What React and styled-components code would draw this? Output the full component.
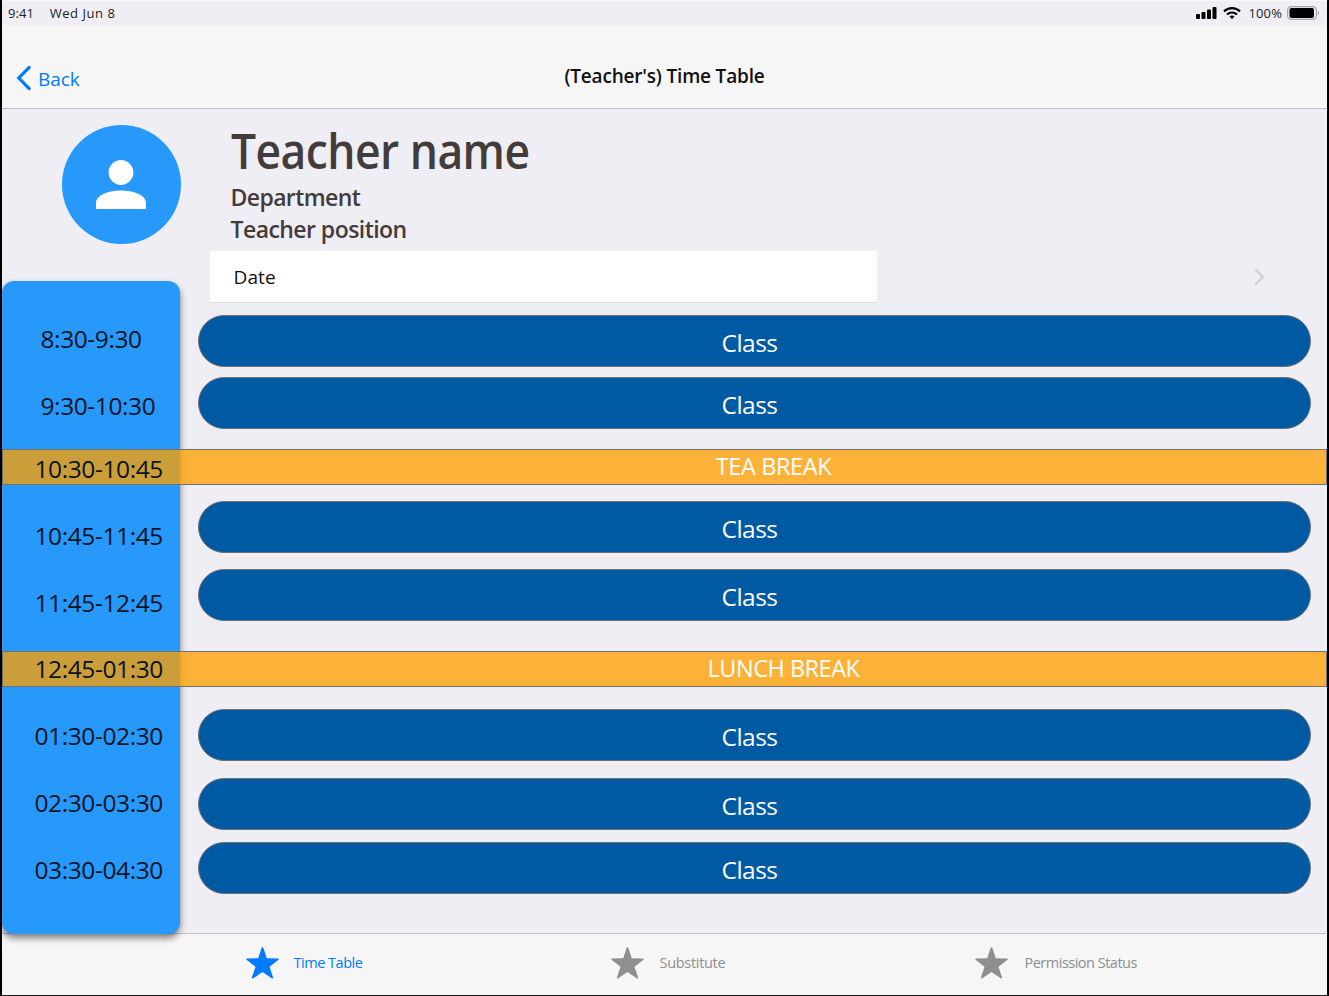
import React from "react";
import styled, { createGlobalStyle } from "styled-components";

const GlobalStyle = createGlobalStyle`
  * { box-sizing: border-box; }
  body {
    margin: 0;
    overflow: hidden;
    background: #000;
    font-family: "Open Sans", "Noto Sans", sans-serif;
  }
`;

const Screen = styled.div`
  width: 1329px;
  height: 996px;
  display: flex;
  flex-direction: column;
  background: #efeef4;
  border: solid #000;
  border-width: 0 2px 1px 2px;
  border-bottom-color: #1b1b1d;
`;

const StatusBar = styled.div`
  height: 25px;
  flex: none;
  display: flex;
  align-items: center;
  padding: 0 7px 0 6px;
  border-top: 1px solid #f8f8fa;
  font-size: 13px;
  line-height: 20px;
  color: #222;
`;

const StatusText = styled.span`
  letter-spacing: ${(p) => p.$spacing || 0}px;
  margin-right: ${(p) => p.$gap || 0}px;
  white-space: nowrap;
`;

const StatusIcons = styled.div`
  margin-left: auto;
  display: flex;
  align-items: center;
`;

const SignalIcon = styled.svg`
  margin-right: 6px;
`;

const WifiIcon = styled.svg`
  margin: -1px 8px 0 0;
`;

const NavBar = styled.header`
  height: 84px;
  flex: none;
  display: grid;
  grid-template-columns: 1fr auto 1fr;
  background: #f6f6f6;
  border-bottom: 1px solid #c1c0c6;
`;

const BackButton = styled.button`
  display: flex;
  align-items: center;
  height: 32px;
  margin: 37px 0 0 13px;
  padding: 0;
  border: 0;
  background: none;
  color: #007aff;
  font: 400 19px/32px "Open Sans", "Noto Sans", sans-serif;
  letter-spacing: -0.1px;
`;

const BackLabel = styled.span`
  padding-top: 1px;
`;

const BackIcon = styled.svg`
  margin-right: 6px;
`;

const Title = styled.h1`
  margin: 36px 0 0;
  font-size: 19px;
  line-height: 30px;
  font-weight: 600;
  letter-spacing: -0.18px;
  color: #111;
`;

const Profile = styled.section`
  height: 142px;
  flex: none;
  display: flex;
  padding: 16px 0 0 59.5px;
`;

const Avatar = styled.div`
  width: 119px;
  height: 119px;
  margin-right: 50px;
  border-radius: 50%;
  background: #2699fb;
  display: grid;
  place-items: center;
`;

const Details = styled.div`
  color: #433c3b;
  font-weight: 600;
`;

const Name = styled.h2`
  margin: -6px 0 -2px;
  font-size: 48px;
  line-height: 64px;
  font-weight: 600;
  letter-spacing: -0.6px;
  transform: scaleX(0.926);
  transform-origin: left center;
`;

const Detail = styled.p`
  margin: 0;
  font-size: 23px;
  line-height: 32px;
  letter-spacing: ${(p) => p.$spacing}px;
`;

const Timetable = styled.main`
  flex: 1;
  min-height: 0;
  display: grid;
  grid-template: 1fr / 1fr;
`;

const TimePanel = styled.aside`
  grid-area: 1 / 1;
  z-index: 1;
  width: 178.4px;
  height: 653px;
  margin-top: 30px;
  border-radius: 12px;
  background: #2699fb;
  box-shadow: 0 4px 7px rgba(0, 0, 0, 0.5);
`;

const TimeList = styled.div`
  grid-area: 1 / 1;
  z-index: 3;
  width: 179px;
  padding-top: 53px;
`;

const Time = styled.div`
  display: flex;
  align-items: center;
  height: ${(p) => p.$height}px;
  padding-left: ${(p) => p.$inset}px;
  font-size: 24.5px;
  letter-spacing: -0.4px;
  color: #07131f;
  white-space: nowrap;
`;

const Sessions = styled.div`
  grid-area: 1 / 1;
  z-index: 2;
  display: flex;
  flex-direction: column;
`;

const DateRow = styled.div`
  height: 52px;
  flex: none;
  display: flex;
  align-items: center;
  justify-content: space-between;
  margin: 0 61px 12px 208px;
`;

const DateField = styled.div`
  width: 667.4px;
  height: 52px;
  padding-left: 23.5px;
  background: #fff;
  border-bottom: 1px solid #dddce2;
  font-size: 19px;
  line-height: 52px;
  letter-spacing: 0.1px;
  color: #111;
`;

const ClassPill = styled.div`
  height: 52px;
  flex: none;
  margin: ${(p) => p.$gap}px 16px 0 196px;
  padding-right: 10px;
  border: 1px solid #707070;
  border-radius: 26px;
  background: #0059a3;
  color: #fff;
  font-size: 24.5px;
  line-height: 54px;
  letter-spacing: -0.5px;
  text-align: center;
`;

const BreakBand = styled.div`
  height: 36px;
  flex: none;
  margin-top: ${(p) => p.$gap}px;
  padding-left: ${(p) => p.$inset}px;
  border: 1px solid #707070;
  background: rgba(255, 160, 0, 0.77);
  color: #fff;
  font-size: 23.5px;
  line-height: 32px;
  letter-spacing: ${(p) => p.$spacing}px;
  text-align: center;
`;

const TabBar = styled.nav`
  height: 62px;
  flex: none;
  display: grid;
  grid-template-columns: 364.5px 364.5px 1fr;
  padding-left: 244px;
  background: #f6f6f6;
  border-top: 1px solid #c1c0c6;
`;

const Tab = styled.div`
  display: flex;
  align-items: center;
  padding-bottom: 4px;
  color: ${(p) => (p.$active ? "#007aff" : "#8e8e93")};
  font-size: 14.5px;
  letter-spacing: ${(p) => p.$spacing}px;
`;

const StarIcon = styled.svg`
  margin-right: ${(p) => p.$gap}px;
`;

const times = [
  { label: "8:30-9:30", height: 68, inset: 38.5 },
  { label: "9:30-10:30", height: 66, inset: 38.5 },
  { label: "10:30-10:45", height: 60, inset: 32.5 },
  { label: "10:45-11:45", height: 74, inset: 32.5 },
  { label: "11:45-12:45", height: 60, inset: 32.5 },
  { label: "12:45-01:30", height: 72, inset: 32.5 },
  { label: "01:30-02:30", height: 62, inset: 32.5 },
  { label: "02:30-03:30", height: 72, inset: 32.5 },
  { label: "03:30-04:30", height: 62, inset: 32.5 },
];

const sessions = [
  { label: "Class", gap: 0 },
  { label: "Class", gap: 10 },
  { label: "TEA BREAK", gap: 20, rest: true, inset: 218, spacing: -0.4 },
  { label: "Class", gap: 16 },
  { label: "Class", gap: 16 },
  { label: "LUNCH BREAK", gap: 30, rest: true, inset: 238, spacing: -0.5 },
  { label: "Class", gap: 22 },
  { label: "Class", gap: 17 },
  { label: "Class", gap: 12 },
];

const tabs = [
  { label: "Time Table", active: true, gap: 14.5, spacing: -0.48 },
  { label: "Substitute", gap: 16, spacing: -0.3 },
  { label: "Permission Status", gap: 16.5, spacing: -0.5 },
];

export default function App() {
  return (
    <>
      <GlobalStyle />
      <Screen>
        <StatusBar>
          <StatusText $gap={15.5} $spacing={0.1}>9:41</StatusText>
          <StatusText $spacing={0.55}>Wed Jun 8</StatusText>
          <StatusIcons>
            <SignalIcon width="21" height="12" viewBox="0 0 21 12">
              <rect x="0" y="7" width="4" height="5" rx="1" />
              <rect x="5.5" y="5" width="4" height="7" rx="1" />
              <rect x="11" y="2.5" width="4" height="9.5" rx="1" />
              <rect x="16.5" y="0" width="4" height="12" rx="1" />
            </SignalIcon>
            <WifiIcon width="18" height="12" viewBox="0 0 18 12" fill="none" stroke="#000" strokeWidth="2.2">
              <path d="M1 4.4C5.5 0.1 12.5 0.1 17 4.4" />
              <path d="M4 7.5C6.8 4.8 11.2 4.8 14 7.5" />
              <path d="M9 12L6.4 9.5C7.9 8.2 10.1 8.2 11.6 9.5Z" fill="#000" stroke="none" />
            </WifiIcon>
            <StatusText $gap={5} $spacing={0.1}>100%</StatusText>
            <svg width="33" height="14" viewBox="0 0 33 14">
              <rect x="0.6" y="0.6" width="28.8" height="12.8" rx="3.6" fill="none" stroke="#a5a4a8" strokeWidth="1.2" />
              <rect x="2.5" y="2" width="24.5" height="10" rx="2" />
              <path d="M30.7 4.5C32.5 5.5 32.5 8.5 30.7 9.5Z" fill="#a5a4a8" />
            </svg>
          </StatusIcons>
        </StatusBar>

        <NavBar>
          <BackButton>
            <BackIcon width="17" height="26" viewBox="0 0 17 26" fill="none" stroke="#007aff" strokeWidth="3.2" strokeLinecap="round" strokeLinejoin="miter">
              <path d="M14.2 2.4L3.8 13L14.2 23.6" />
            </BackIcon>
            <BackLabel>Back</BackLabel>
          </BackButton>
          <Title>(Teacher's) Time Table</Title>
        </NavBar>

        <Profile>
          <Avatar>
            <svg width="50" height="50" viewBox="0 0 50 50" fill="#fff">
              <circle cx="25" cy="12.5" r="12.4" />
              <path d="M0 49V43C0 35 13 30.5 25 30.5S50 35 50 43V49Z" />
            </svg>
          </Avatar>
          <Details>
            <Name>Teacher name</Name>
            <Detail $spacing={-0.6}>Department</Detail>
            <Detail $spacing={-0.55}>Teacher position</Detail>
          </Details>
        </Profile>

        <Timetable>
          <TimePanel />
          <Sessions>
            <DateRow>
              <DateField>Date</DateField>
              <svg width="14" height="18" viewBox="0 0 14 18" fill="none" stroke="#d1d0d6" strokeWidth="2.3">
                <path d="M3 1.3L11 9L3 16.7" />
              </svg>
            </DateRow>
            {sessions.map((s, i) =>
              s.rest ? (
                <BreakBand key={i} $gap={s.gap} $inset={s.inset} $spacing={s.spacing}>{s.label}</BreakBand>
              ) : (
                <ClassPill key={i} $gap={s.gap}>{s.label}</ClassPill>
              )
            )}
          </Sessions>
          <TimeList>
            {times.map((t) => (
              <Time key={t.label} $height={t.height} $inset={t.inset}>{t.label}</Time>
            ))}
          </TimeList>
        </Timetable>

        <TabBar>
          {tabs.map((t) => (
            <Tab key={t.label} $active={t.active} $spacing={t.spacing}>
              <StarIcon $gap={t.gap} width="33" height="32" viewBox="0 0 33 32" fill="currentColor">
                <path d="M15.6 1.1Q16.5 -0.4 17.4 1.1L20.8 11.2L31.7 11.4Q33.6 11.8 32.2 13.1L23.5 19.7L27 30.2Q27.2 31.9 25.7 31.2L16.5 25L7.3 31.2Q5.8 31.9 6 30.2L9.5 19.7L0.8 13.1Q-0.6 11.8 1.3 11.4L12.2 11.2Z" />
              </StarIcon>
              {t.label}
            </Tab>
          ))}
        </TabBar>
      </Screen>
    </>
  );
}
